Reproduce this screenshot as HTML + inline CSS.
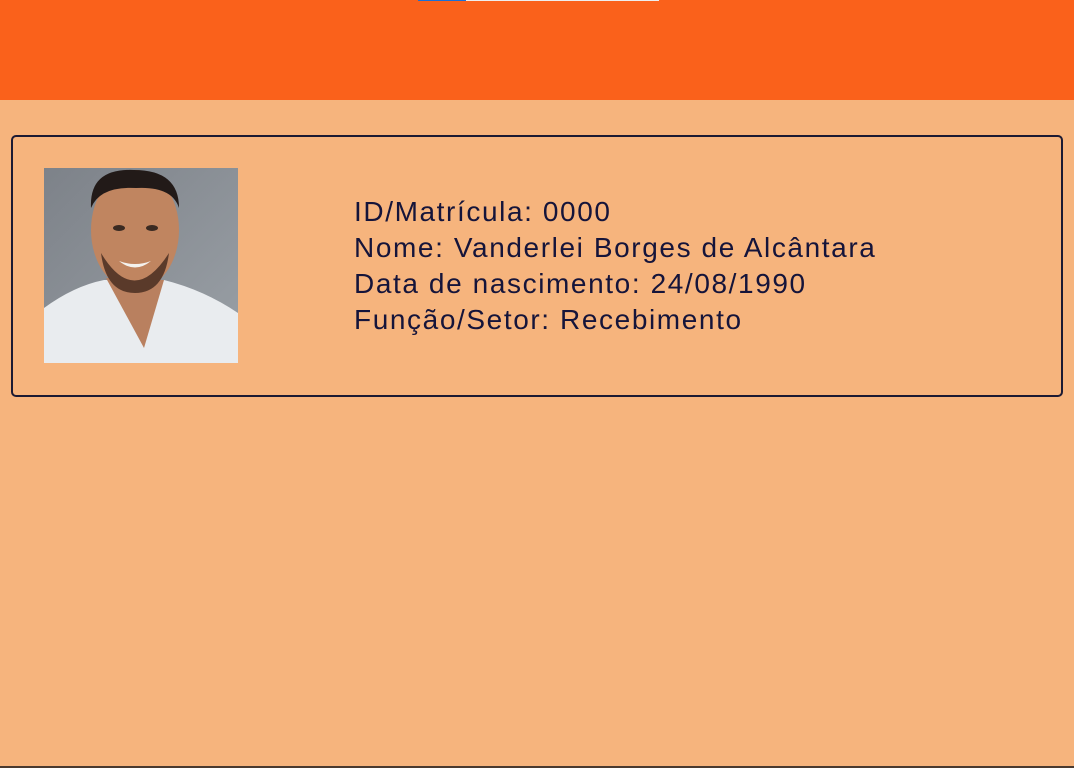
<!DOCTYPE html>
<html><head><meta charset="utf-8"><style>
html,body{margin:0;padding:0;}
body{width:1074px;height:768px;background:#f6b47d;position:relative;overflow:hidden;font-family:"Liberation Sans",sans-serif;}
.top{position:absolute;left:0;top:0;width:1074px;height:100px;background:#fa611b;}
.blue{position:absolute;left:418px;top:0;width:48px;height:1px;background:#1a6fd6;}
.white{position:absolute;left:466px;top:0;width:193px;height:1px;background:#eeeeee;}
.card{position:absolute;left:11px;top:135px;width:1048px;height:258px;border:2px solid #1c1a33;border-radius:5px;}
.photo{position:absolute;left:44px;top:168px;width:194px;height:195px;}
.txt{position:absolute;left:354px;top:194px;font-size:28px;line-height:36px;color:#15143a;letter-spacing:1.6px;white-space:nowrap;}
.bot{position:absolute;left:0;top:766px;width:1074px;height:2px;background:#4a3a30;}
</style></head><body>
<div class="top"></div><div class="blue"></div><div class="white"></div>
<div class="card"></div>
<svg class="photo" viewBox="0 0 194 195">
<defs><linearGradient id="bg" x1="0" y1="0" x2="1" y2="1"><stop offset="0" stop-color="#7d8289"/><stop offset="1" stop-color="#9aa0a6"/></linearGradient></defs>
<rect width="194" height="195" fill="url(#bg)"/>
<path d="M0 140 Q30 118 60 112 L120 112 Q160 122 194 145 L194 195 L0 195Z" fill="#e9ecef"/>
<path d="M62 110 L120 112 L100 180 Z" fill="#b9805f"/>
<ellipse cx="91" cy="62" rx="44" ry="60" fill="#c08560"/>
<path d="M47 40 Q45 0 90 2 Q135 2 135 40 Q128 18 92 20 Q56 18 47 40Z" fill="#221a18"/>
<path d="M57 85 Q90 140 125 85 Q120 125 91 125 Q62 125 57 85Z" fill="#5a3a2a"/>
<path d="M75 93 Q91 106 107 93 Q91 99 75 93Z" fill="#f4f2ee"/>
<ellipse cx="75" cy="60" rx="6" ry="3" fill="#3a2a22"/>
<ellipse cx="108" cy="60" rx="6" ry="3" fill="#3a2a22"/>
</svg>
<div class="txt">ID/Matrícula: 0000<br>Nome: Vanderlei Borges de Alcântara<br>Data de nascimento: 24/08/1990<br>Função/Setor: Recebimento</div>
<div class="bot"></div>
</body></html>
